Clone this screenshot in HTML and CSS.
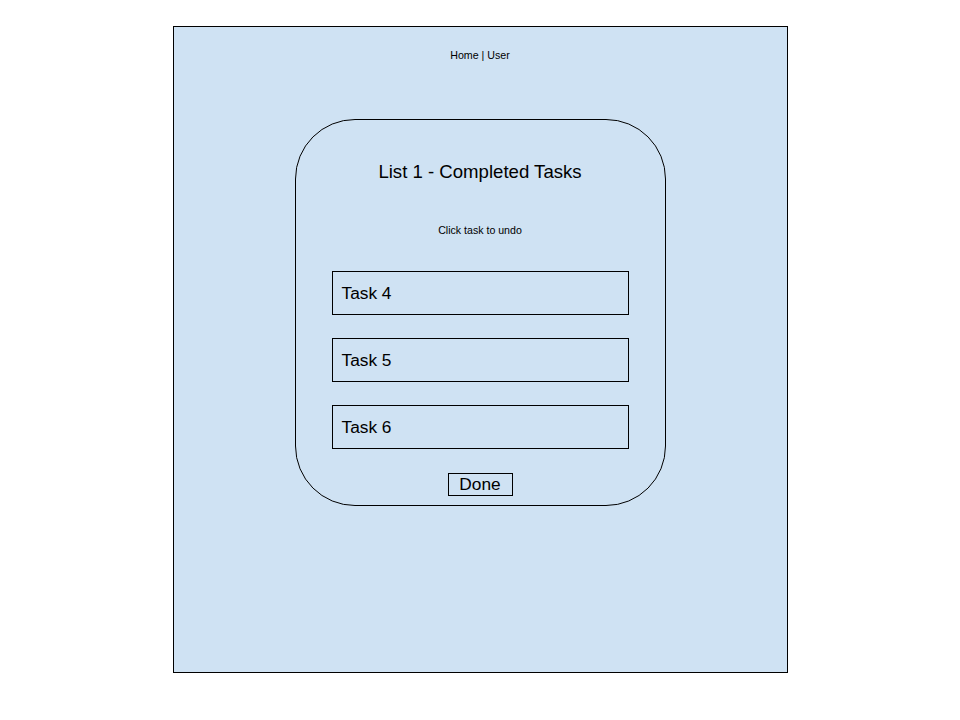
FILE: index.html
```html
<!DOCTYPE html>
<html lang="en">
<head>
    <meta charset="UTF-8">
    <meta name="viewport" content="width=device-width, initial-scale=1.0">
    <title>Completed Tasks</title>
    <link rel="stylesheet" href="styles.css">
</head>
<body>

    <div class="frame">
        <nav class="nav">Home | User</nav>

        <div class="card">
            <h1>List 1 - Completed Tasks</h1>
            <p class="hint">Click task to undo</p>

            <ul class="task-list">
                <li class="task">Task 4</li>
                <li class="task">Task 5</li>
                <li class="task">Task 6</li>
            </ul>

            <button class="done">Done</button>
        </div>
    </div>

</body>
</html>
```

FILE: styles.css
```css
/* General Styles */
body {
    font-family: 'Liberation Sans', Arial, sans-serif;
    background: #ffffff;
    color: #000;
    margin: 0;
    padding: 0;
}

.frame {
    width: 613px;
    height: 645px;
    margin: 26px auto 0;
    background-color: #cfe2f3;
    border: 1px solid #000;
    display: flex;
    flex-direction: column;
    align-items: center;
}

.nav {
    padding-top: 21px;
    font-size: 10.67px;
    line-height: 14px;
}

.card {
    width: 369px;
    height: 385px;
    margin-top: 57px;
    border: 1px solid #000;
    border-radius: 60px;
    display: flex;
    flex-direction: column;
    align-items: center;
}

h1 {
    margin: 40px 0 0;
    font-size: 18.6px;
    font-weight: normal;
    line-height: 24px;
}

.hint {
    margin: 39px 0 0;
    font-size: 10.6px;
    line-height: 14px;
}

.task-list {
    list-style: none;
    margin: 34px 0 0;
    padding: 0;
    display: flex;
    flex-direction: column;
    gap: 23px;
}

.task {
    width: 286px;
    height: 42px;
    padding-left: 9px;
    border: 1px solid #000;
    display: flex;
    align-items: center;
    font-size: 17.3px;
}

.done {
    margin-top: 24px;
    width: 65px;
    height: 23px;
    padding: 0;
    background: transparent;
    border: 1px solid #000;
    border-radius: 0;
    font-family: inherit;
    font-size: 17.3px;
    line-height: 21px;
    color: #000;
}
```
